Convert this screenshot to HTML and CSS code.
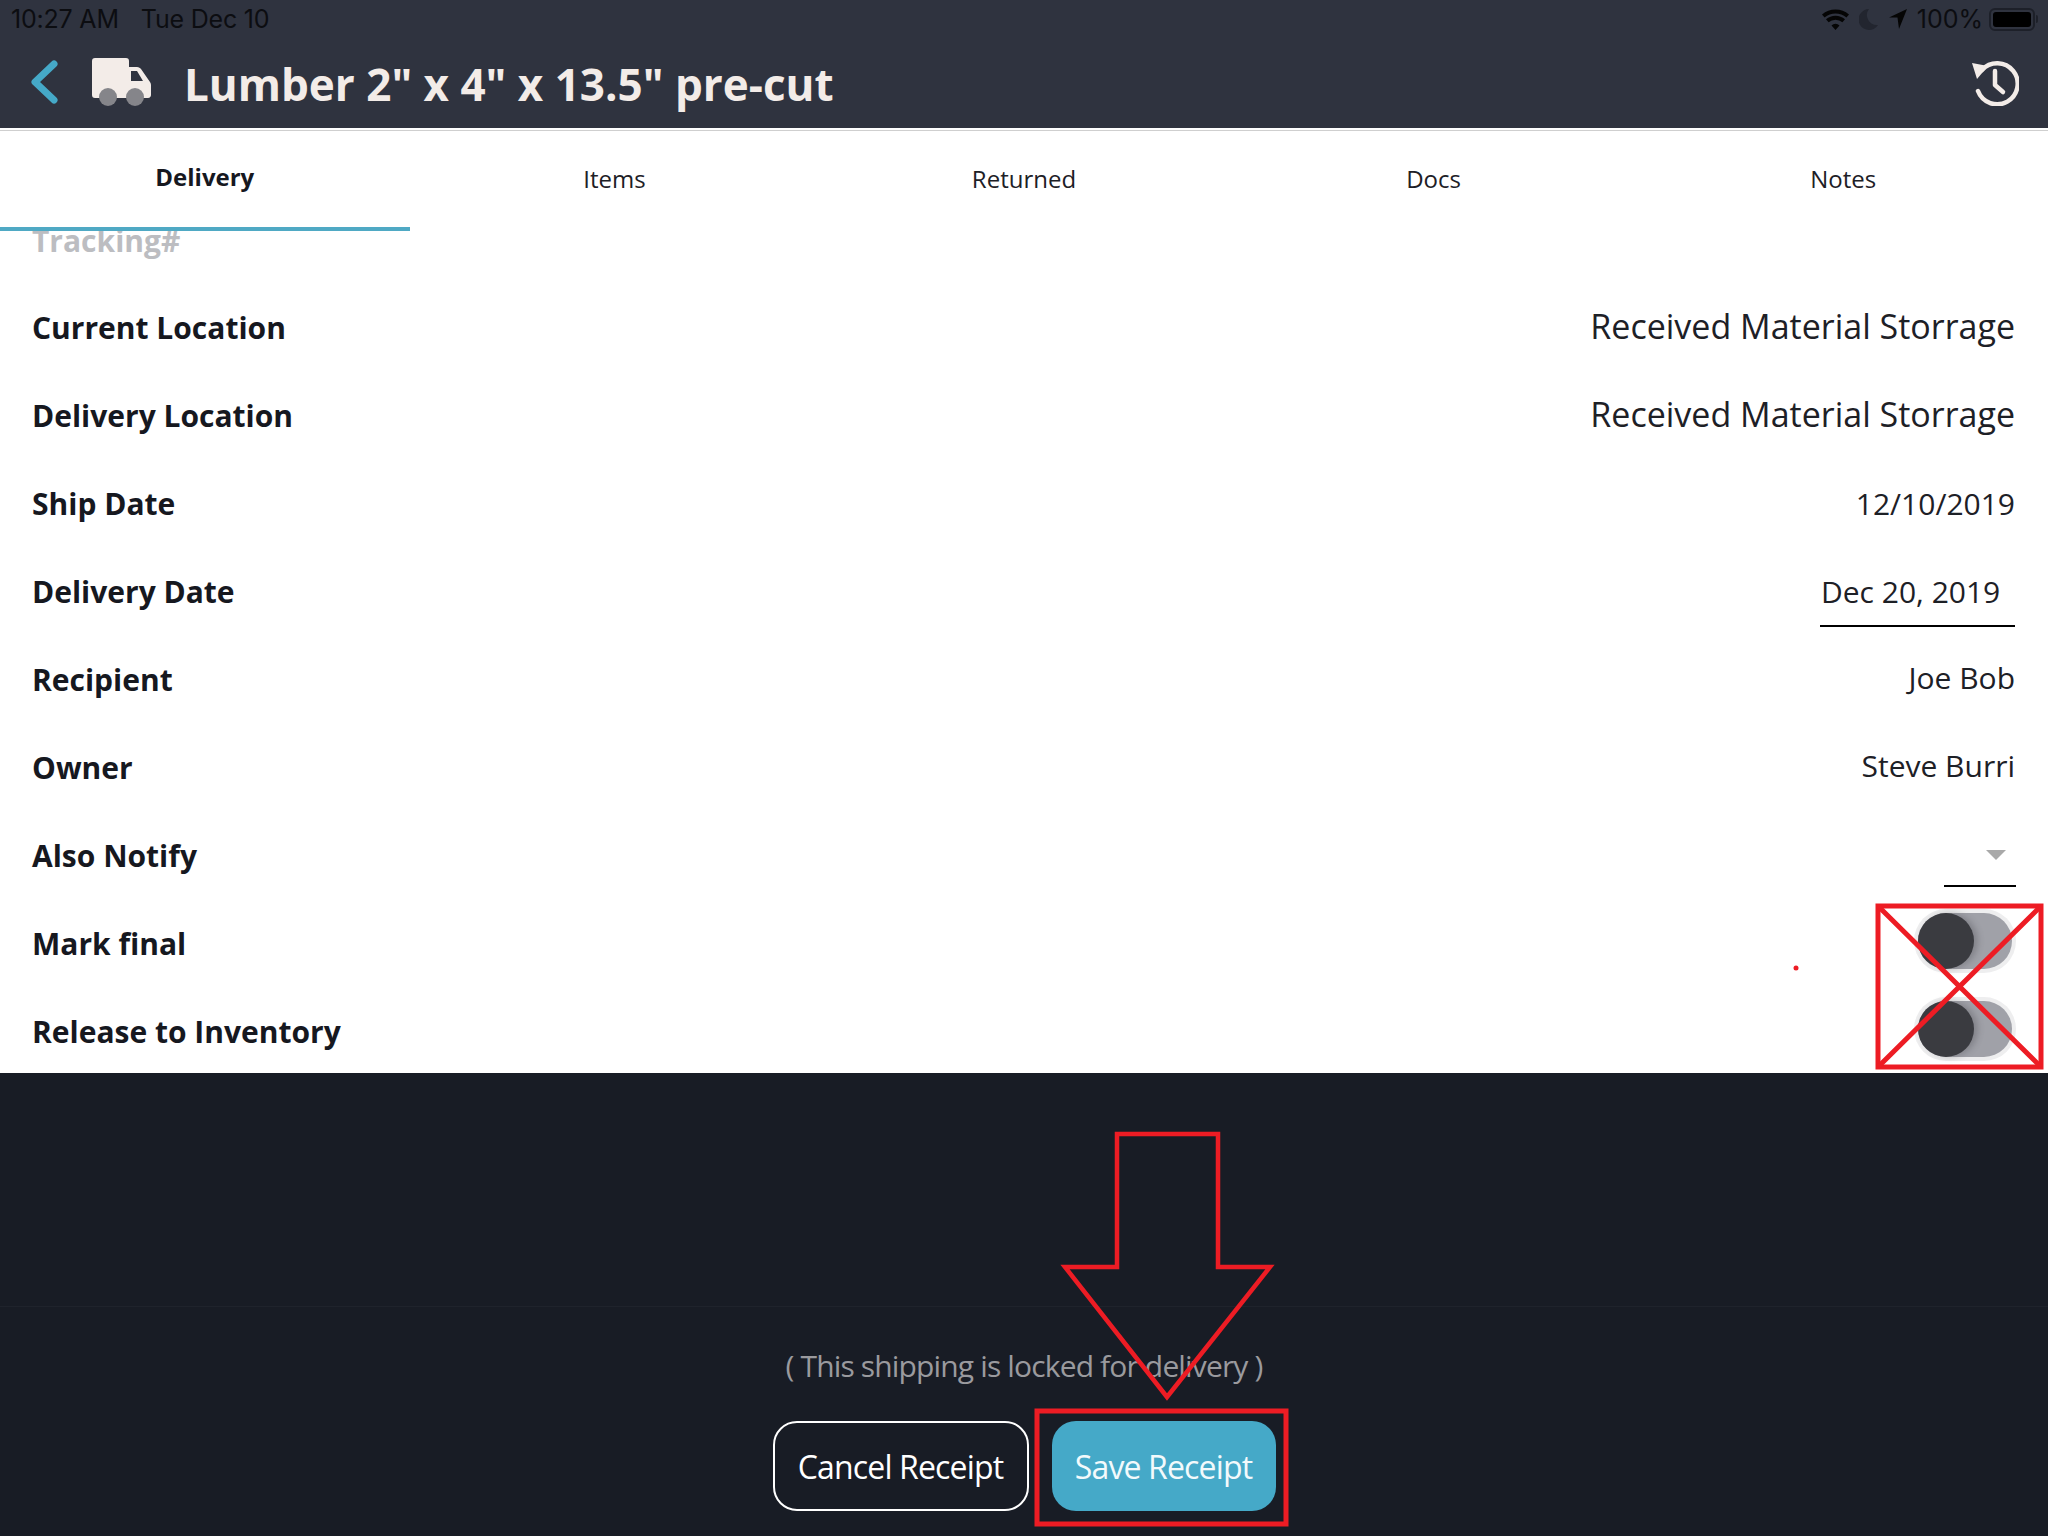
FILE: index.html
```html
<!DOCTYPE html>
<html lang="en">
<head>
<meta charset="utf-8">
<title>Lumber delivery</title>
<link rel="stylesheet" href="styles.css">
</head>
<body>
<div class="app">
  <header class="header">
    <div class="status">
      <div class="status-left"><span>10:27 AM</span><span>Tue Dec 10</span></div>
      <div class="status-right">
        <svg class="ic-wifi" viewBox="0 0 27 21"><path d="M13.5 21l-4-4.6a6 6 0 0 1 8 0zM6.6 13.2l-2.6-3a14.6 14.6 0 0 1 19 0l-2.6 3a10.6 10.6 0 0 0-13.8 0zM2.6 8.6L0 5.6a20.6 20.6 0 0 1 27 0l-2.6 3a16.8 16.8 0 0 0-21.8 0z" fill="#050505"/></svg>
        <svg class="ic-moon" viewBox="0 0 19 21"><path d="M10 0a10.500 10.500 0 1 0 9 16A10 10 0 0 1 10 0z" fill="#22252f"/></svg>
        <svg class="ic-loc" viewBox="0 0 18 20"><path d="M18 0L0 8.500h8.500L10 20z" fill="#050505"/></svg>
        <span class="pct">100%</span>
        <div class="battery"><div class="battery-fill"></div></div>
        <div class="battery-nub"></div>
      </div>
    </div>
    <div class="titlebar">
      <svg class="ic-back" viewBox="0 0 28 44"><path d="M24 4L5 22l19 18" fill="none" stroke="#45a9c8" stroke-width="7" stroke-linecap="round" stroke-linejoin="round"/></svg>
      <svg class="ic-truck" viewBox="0 0 60 48">
        <path d="M3 0h31a3 3 0 0 1 3 3v6h8c2 0 3 1 4 2l9 13c.7 1 1 2 1 3v10c0 1.500-1 3-3 3H3a3 3 0 0 1-3-3V3a3 3 0 0 1 3-3z" fill="#f3ece8"/>
        <path d="M39 13h6l6 10H39z" fill="#2f333f"/>
        <circle cx="16" cy="39" r="9" fill="#85858a"/>
        <circle cx="43" cy="39" r="9" fill="#85858a"/>
      </svg>
      <h1 class="title">Lumber 2" x 4" x 13.5" pre-cut</h1>
      <svg class="ic-history" viewBox="0 0 48 48">
        <path d="M11 12A20.500 20.500 0 1 1 7 33" fill="none" stroke="#f3ece8" stroke-width="4.500" stroke-linecap="round"/>
        <path d="M1 5l16 3-11 13z" fill="#f3ece8"/>
        <path d="M24 13v14l8 7" fill="none" stroke="#f3ece8" stroke-width="4.500" stroke-linecap="round" stroke-linejoin="round"/>
      </svg>
    </div>
  </header>
  <div class="rule"></div>
  <nav class="tabs">
    <div class="tab tab-active">Delivery</div>
    <div class="tab">Items</div>
    <div class="tab">Returned</div>
    <div class="tab">Docs</div>
    <div class="tab">Notes</div>
  </nav>
  <main class="content">
    <div class="list">
      <div class="row row-faded"><span class="label">Tracking#</span></div>
      <div class="row"><span class="label">Current Location</span><span class="value value-lg">Received Material Storrage</span></div>
      <div class="row"><span class="label">Delivery Location</span><span class="value value-lg">Received Material Storrage</span></div>
      <div class="row"><span class="label">Ship Date</span><span class="value">12/10/2019</span></div>
      <div class="row"><span class="label">Delivery Date</span><span class="date">Dec 20, 2019</span></div>
      <div class="row"><span class="label">Recipient</span><span class="value value-raised">Joe Bob</span></div>
      <div class="row"><span class="label">Owner</span><span class="value value-raised">Steve Burri</span></div>
      <div class="row"><span class="label">Also Notify</span><div class="select"><div class="caret"></div></div></div>
      <div class="row"><span class="label">Mark final</span><div class="toggle"><div class="knob"></div></div></div>
      <div class="row"><span class="label">Release to Inventory</span><div class="toggle"><div class="knob"></div></div></div>
    </div>
  </main>
  <footer class="footer">
    <div class="footer-line"></div>
    <p class="locked">( This shipping is locked for delivery )</p>
    <div class="actions">
      <button class="btn btn-cancel">Cancel Receipt</button>
      <button class="btn btn-save">Save Receipt</button>
    </div>
  </footer>
  <svg class="marks" viewBox="0 0 2048 1536">
    <g fill="none" stroke="#ed1c24" stroke-width="5">
      <rect x="1878" y="906" width="163" height="161"/>
      <path d="M1878 906l163 161M2041 906l-163 161"/>
      <rect x="1037" y="1411" width="249" height="113"/>
      <path d="M1117 1134h101v133h52l-103 130-102-130h52z" stroke-width="4.500"/>
    </g>
    <circle cx="1796" cy="968" r="2.500" fill="#ed1c24"/>
  </svg>
</div>
</body>
</html>
```
FILE: styles.css
```css
* { box-sizing: border-box; }
html, body { margin: 0; padding: 0; }
body { font-family: "Open Sans", "Noto Sans", sans-serif; background: #181c25; }
.app { position: relative; width: 2048px; height: 1536px; display: flex; flex-direction: column; overflow: hidden; }

.header { height: 128px; background: #2f333f; flex: none; }
.status { height: 38px; display: flex; justify-content: space-between; align-items: center; color: #0c0d11; font-size: 25px; font-family: "Inter", "Noto Sans", sans-serif; padding: 0 10px 0 11px; }
.status-left { display: flex; gap: 22px; letter-spacing: -0.2px; }
.status-right { display: flex; align-items: center; }
.ic-wifi { width: 27px; height: 21px; margin-right: 10px; }
.ic-moon { width: 19px; height: 21px; margin-right: 11px; }
.ic-loc { width: 18px; height: 20px; margin-right: 10px; }
.pct { margin-right: 6px; }
.battery { width: 46px; height: 23px; border: 2px solid #1d2029; border-radius: 6px; padding: 2px; }
.battery-fill { width: 100%; height: 100%; background: #000; border-radius: 3px; }
.battery-nub { width: 2px; height: 8px; background: #1d2029; margin-left: 1px; border-radius: 0 2px 2px 0; }

.titlebar { height: 90px; display: flex; align-items: center; padding: 0 29px 2px 30px; }
.ic-back { width: 28px; height: 44px; flex: none; }
.ic-truck { width: 60px; height: 48px; margin-left: 34px; flex: none; }
.title { margin: 4px 0 0 32px; flex: 1; font-size: 44px; font-weight: 700; color: #f3ece8; line-height: 60px; white-space: nowrap; }
.ic-history { width: 48px; height: 48px; flex: none; }

.rule { height: 3px; flex: none; background: #fff; border-bottom: 1px solid #cfcfcf; }
.tabs { height: 100px; flex: none; display: grid; grid-template-columns: repeat(5, 1fr); background: #fff; position: relative; z-index: 1; }
.tab { height: 100px; padding-top: 31px; text-align: center; font-size: 24px; line-height: 33px; color: #1d2026; }
.tab-active { font-weight: 700; padding-top: 29px; border-bottom: 4px solid #4fa9c4; color: #16181f; }

.content { height: 842px; flex: none; background: #fff; overflow: hidden; }
.list { margin-top: -35px; }
.row { height: 88px; display: flex; justify-content: space-between; align-items: center; padding: 0 33px 0 32px; }
.row-faded .label { color: #bcbdc1; margin-top: 2px; }
.label { font-size: 30px; font-weight: 700; color: #16181f; line-height: 40px; }
.value { font-size: 30px; color: #1d2026; line-height: 40px; }
.value-lg { font-size: 34px; margin-top: -5px; }
.value-raised { margin-top: -5px; }
.date { width: 195px; height: 68px; margin-top: 2px; border-bottom: 2px solid #000; font-size: 30px; color: #1d2026; line-height: 40px; padding: 13px 0 0 1px; }
.select { position: relative; width: 72px; height: 58px; margin-top: 3px; border-bottom: 2px solid #000; margin-right: -1px; }
.caret { position: absolute; top: 21px; right: 10px; width: 0; height: 0; border-left: 10px solid transparent; border-right: 10px solid transparent; border-top: 10px solid #a9a9a9; }
.toggle { position: relative; width: 94px; height: 56px; margin-top: -6px; margin-right: 3px; background: #a0a1a8; border-radius: 28px; box-shadow: 0 0 0 4px #eeeeef; }
.knob { width: 56px; height: 56px; border-radius: 50%; background: #3a3b40; box-shadow: 4px 0 6px rgba(60,60,65,.3); }

.footer { flex: 1; position: relative; background: #181c25; display: flex; flex-direction: column; align-items: center; }
.footer-line { position: absolute; top: 233px; left: 0; right: 0; height: 1px; background: #1f232c; }
.locked { margin: 271px 0 0; font-size: 30px; line-height: 44px; color: #9a9a9e; letter-spacing: -0.85px; }
.actions { display: flex; gap: 23px; margin-top: 33px; }
.btn { height: 90px; font-family: inherit; font-size: 32px; border-radius: 24px; color: #fff; padding: 0; text-align: center; letter-spacing: -0.85px; }
.btn-cancel { width: 256px; background: transparent; border: 2px solid #fff; }
.btn-save { width: 224px; background: #45a9c8; border: 0; color: #f2fafc; }

.marks { position: absolute; inset: 0; width: 2048px; height: 1536px; pointer-events: none; z-index: 2; }
```
